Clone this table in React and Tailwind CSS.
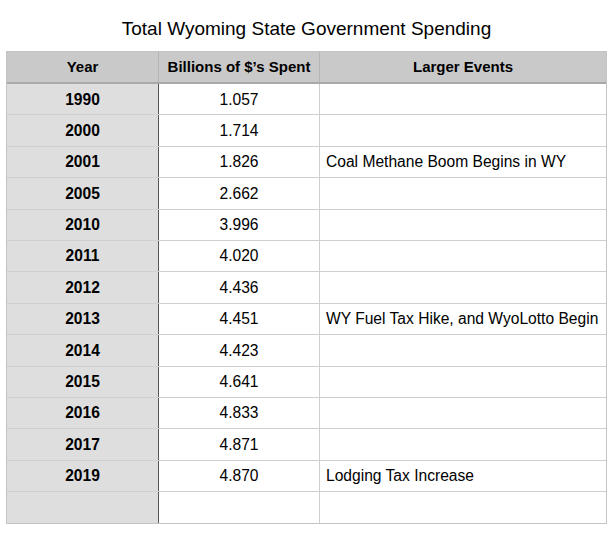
const rows = [
  ['1990', '1.057', ''],
  ['2000', '1.714', ''],
  ['2001', '1.826', 'Coal Methane Boom Begins in WY'],
  ['2005', '2.662', ''],
  ['2010', '3.996', ''],
  ['2011', '4.020', ''],
  ['2012', '4.436', ''],
  ['2013', '4.451', 'WY Fuel Tax Hike, and WyoLotto Begin'],
  ['2014', '4.423', ''],
  ['2015', '4.641', ''],
  ['2016', '4.833', ''],
  ['2017', '4.871', ''],
  ['2019', '4.870', 'Lodging Tax Increase'],
  ['', '', ''],
];

export default function App() {
  return (
    <div className="w-[613px] h-[534px] bg-white text-black font-['Liberation_Sans',Arial,sans-serif]">
      <h1 className="pt-[17px] h-[51px] text-center text-[19px] leading-[23px]">
        Total Wyoming State Government Spending
      </h1>
      <div className="ml-[6px] w-[601px] border border-[#c4c4c4]">
        <div className="grid grid-cols-[152px_161px_1fr] h-[32px] bg-[#c9c9c9] border-b-2 border-[#a9a9a9] text-[15px] font-bold">
          <div className="flex items-center justify-center border-r border-[#b5b5b5]">Year</div>
          <div className="flex items-center justify-center border-r border-[#b5b5b5]">Billions of $’s Spent</div>
          <div className="flex items-center justify-center">Larger Events</div>
        </div>
        {rows.map((r, i) => (
          <div
            key={i}
            className={`grid grid-cols-[152px_161px_1fr] h-[31.4px] text-[15.6px] ${i < rows.length - 1 ? 'border-b border-[#cfcfcf]' : ''}`}
          >
            <div className="flex items-center justify-center bg-[#dedede] font-bold border-r border-[#555]">{r[0]}</div>
            <div className="flex items-center justify-center border-r border-[#cfcfcf]">{r[1]}</div>
            <div className="flex items-center pl-[6px] whitespace-nowrap">{r[2]}</div>
          </div>
        ))}
      </div>
    </div>
  );
}
